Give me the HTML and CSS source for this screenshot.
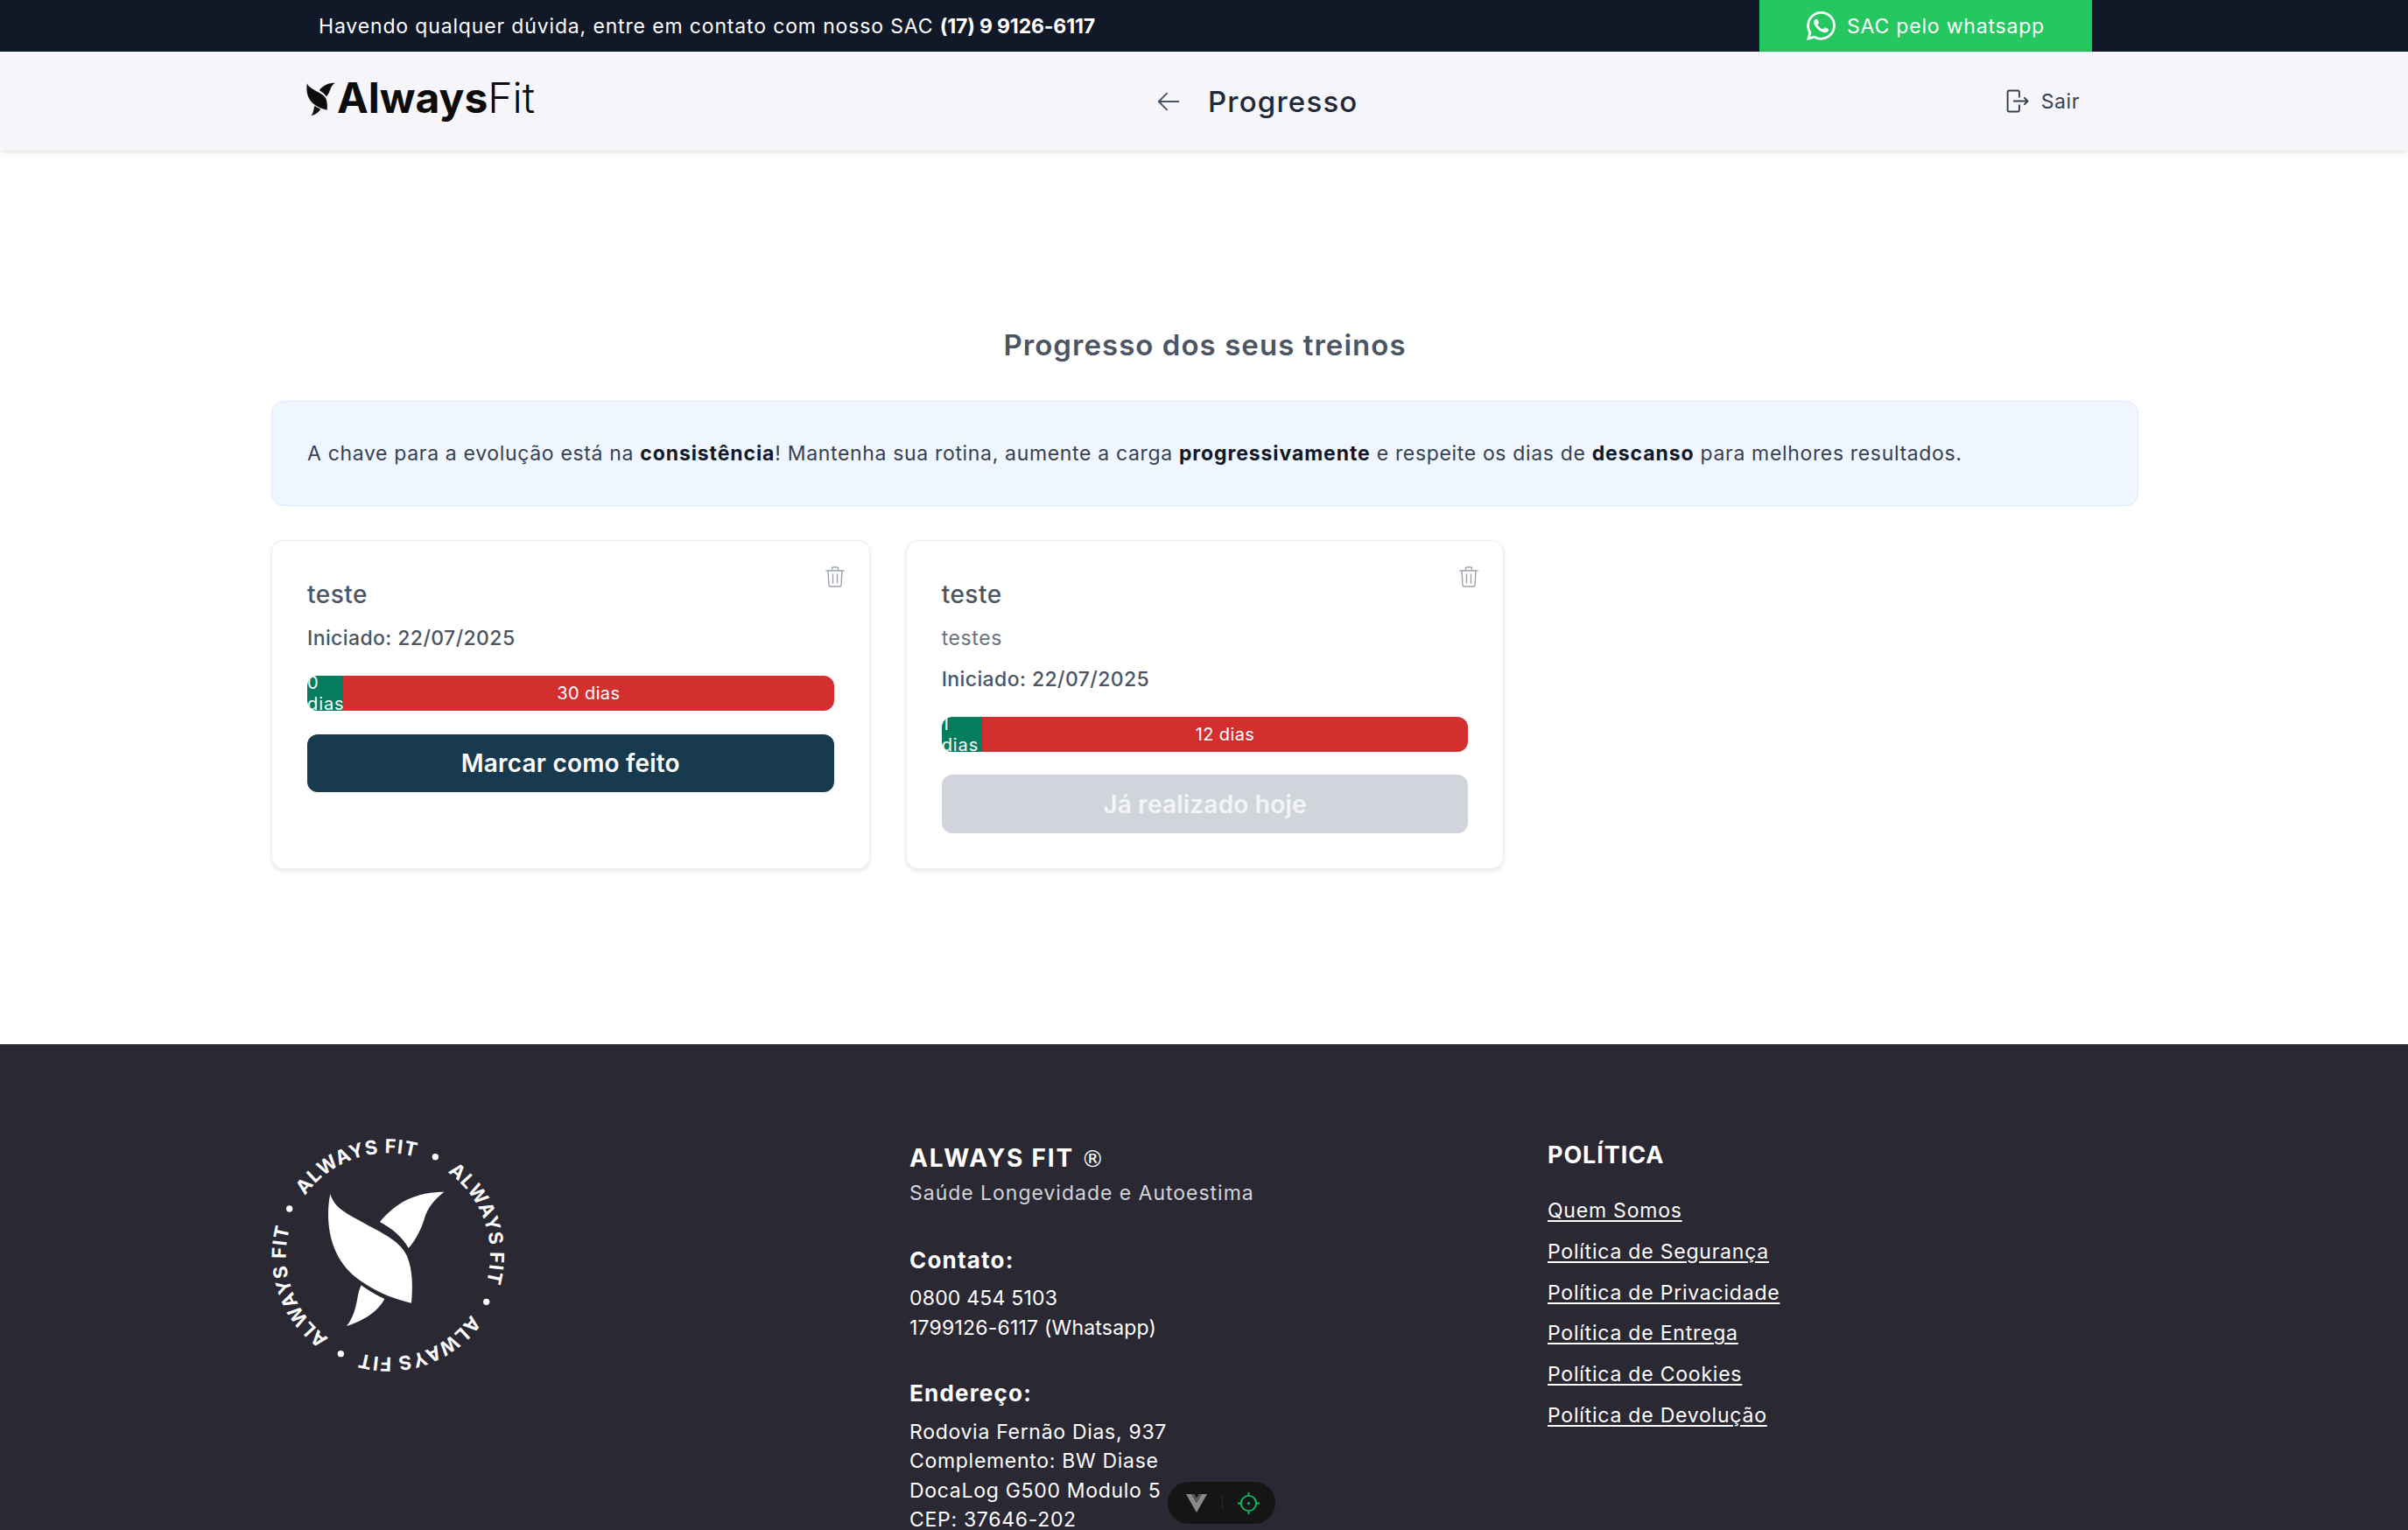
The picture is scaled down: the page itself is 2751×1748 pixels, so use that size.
FILE: index.html
```html
<!DOCTYPE html>
<html lang="pt-BR">
<head>
    <meta charset="UTF-8">
    <meta name="viewport" content="width=device-width, initial-scale=1.0">
    <title>Progresso</title>
    <link rel="stylesheet" href="styles.css">
</head>
<body>
<div class="topbar">
  <span class="topbar-text">Havendo qualquer dúvida, entre em contato com nosso SAC <b>(17) 9 9126-6117</b></span>
  <a class="whats-btn">
    <svg class="whats-icon" viewBox="0 0 24 24"><path fill="#fff" d="M17.472 14.382c-.297-.149-1.758-.867-2.03-.967-.273-.099-.471-.148-.67.15-.197.297-.767.966-.94 1.164-.173.199-.347.223-.644.075-.297-.15-1.255-.463-2.39-1.475-.883-.788-1.48-1.761-1.653-2.059-.173-.297-.018-.458.13-.606.134-.133.298-.347.446-.52.149-.174.198-.298.298-.497.099-.198.05-.371-.025-.52-.075-.149-.669-1.612-.916-2.207-.242-.579-.487-.5-.669-.51-.173-.008-.371-.01-.57-.01-.198 0-.52.074-.792.372-.272.297-1.04 1.016-1.04 2.479 0 1.462 1.065 2.875 1.213 3.074.149.198 2.096 3.2 5.077 4.487.709.306 1.262.489 1.694.625.712.227 1.36.195 1.871.118.571-.085 1.758-.719 2.006-1.413.248-.694.248-1.289.173-1.413-.074-.124-.272-.198-.57-.347m-5.421 7.403h-.004a9.87 9.87 0 01-5.031-1.378l-.361-.214-3.741.982.998-3.648-.235-.374a9.86 9.86 0 01-1.51-5.26c.001-5.45 4.436-9.884 9.888-9.884 2.64 0 5.122 1.03 6.988 2.898a9.825 9.825 0 012.893 6.994c-.003 5.45-4.437 9.884-9.885 9.884m8.413-18.297A11.815 11.815 0 0012.05 0C5.495 0 .16 5.335.157 11.892c0 2.096.547 4.142 1.588 5.945L.057 24l6.305-1.654a11.882 11.882 0 005.683 1.448h.005c6.554 0 11.89-5.335 11.893-11.893a11.821 11.821 0 00-3.48-8.413Z"/></svg>
    SAC pelo whatsapp
  </a>
</div>

<header class="header">
  <a class="logo">
    <svg class="logo-mark" viewBox="250 270 405 470"><path d="M262 282C275 330 320 350 370 378C430 412 500 440 525 495C545 545 545 600 540 656C470 640 400 610 340 560C285 510 255 440 255 350C255 325 258 300 262 282Z"/><path d="M652 275C620 275 560 280 510 310C480 328 450 355 432 378C470 398 510 430 530 468C555 440 575 400 585 365C595 330 620 300 652 275Z"/><path d="M368 595C395 615 425 632 448 642C430 675 395 710 318 735C340 710 350 670 355 640C358 622 362 608 368 595Z"/></svg>
    <span class="logo-text"><b>Always</b>Fit</span>
  </a>
  <div class="page-title">
    <svg class="back-icon" viewBox="0 0 24 24" fill="none" stroke="#4b5563" stroke-width="1.5" stroke-linecap="round" stroke-linejoin="round"><path d="M10.5 19.5 3 12l7.5-7.5M3 12h18"/></svg>
    <span>Progresso</span>
  </div>
  <a class="logout">
    <svg class="logout-icon" viewBox="0 0 24 24" fill="none" stroke="#374151" stroke-width="1.6" stroke-linecap="round" stroke-linejoin="round"><path d="M14 8V3.500A1.500 1.500 0 0 0 12.500 2H4.500A1.500 1.500 0 0 0 3 3.500v17A1.500 1.500 0 0 0 4.500 22h8a1.500 1.500 0 0 0 1.500-1.500V16"/><path d="M9 12h13M19 9l3 3-3 3"/></svg>
    Sair
  </a>
</header>

<main class="main">
  <h1 class="main-title">Progresso dos seus treinos</h1>
  <div class="tip">A chave para a evolução está na <b>consistência</b>! Mantenha sua rotina, aumente a carga <b>progressivamente</b> e respeite os dias de <b>descanso</b> para melhores resultados.</div>

  <div class="cards">
    <div class="card">
      <svg class="trash" viewBox="0 0 22 24" fill="none" stroke="#9ca3af" stroke-width="1.4" stroke-linecap="round" stroke-linejoin="round"><path d="M1 5h20M7.500 5V2.500A1.500 1.500 0 0 1 9 1h4a1.500 1.500 0 0 1 1.500 1.500V5M3 5l1 16.500A1.500 1.500 0 0 0 5.500 23h11a1.500 1.500 0 0 0 1.500-1.500L19 5M8.500 9v10M13.500 9v10"/></svg>
      <h2 class="card-title">teste</h2>
      <p class="card-started">Iniciado: 22/07/2025</p>
      <div class="bar">
        <div class="bar-done w-first">0 dias</div>
        <div class="bar-left">30 dias</div>
      </div>
      <button class="btn">Marcar como feito</button>
    </div>

    <div class="card">
      <svg class="trash" viewBox="0 0 22 24" fill="none" stroke="#9ca3af" stroke-width="1.4" stroke-linecap="round" stroke-linejoin="round"><path d="M1 5h20M7.500 5V2.500A1.500 1.500 0 0 1 9 1h4a1.500 1.500 0 0 1 1.500 1.500V5M3 5l1 16.500A1.500 1.500 0 0 0 5.500 23h11a1.500 1.500 0 0 0 1.500-1.500L19 5M8.500 9v10M13.500 9v10"/></svg>
      <h2 class="card-title">teste</h2>
      <p class="card-desc">testes</p>
      <p class="card-started second">Iniciado: 22/07/2025</p>
      <div class="bar">
        <div class="bar-done w-second">1 dias</div>
        <div class="bar-left">12 dias</div>
      </div>
      <button class="btn btn-disabled" disabled>Já realizado hoje</button>
    </div>
  </div>
</main>

<footer class="footer">
  <div class="footer-logo">
    <svg class="seal" viewBox="0 0 930 930">
      <defs><path id="ring" d="M460 142A350 350 0 1 1 459.900 142"/></defs>
      <g fill="#fff">
        <path d="M262 282C275 330 320 350 370 378C430 412 500 440 525 495C545 545 545 600 540 656C470 640 400 610 340 560C285 510 255 440 255 350C255 325 258 300 262 282Z"/>
        <path d="M652 275C620 275 560 280 510 310C480 328 450 355 432 378C470 398 510 430 530 468C555 440 575 400 585 365C595 330 620 300 652 275Z"/>
        <path d="M368 595C395 615 425 632 448 642C430 675 395 710 318 735C340 710 350 670 355 640C358 622 362 608 368 595Z"/>
        <circle cx="622" cy="155" r="11"/><circle cx="122" cy="333" r="11"/><circle cx="797" cy="652" r="11"/><circle cx="298" cy="830" r="11"/>
        <g class="seal-text">
          <text transform="rotate(-54.400 460 492)"><textPath href="#ring" textLength="428">ALWAYS FIT</textPath></text>
          <text transform="rotate(35.600 460 492)"><textPath href="#ring" textLength="428">ALWAYS FIT</textPath></text>
          <text transform="rotate(125.600 460 492)"><textPath href="#ring" textLength="428">ALWAYS FIT</textPath></text>
          <text transform="rotate(215.600 460 492)"><textPath href="#ring" textLength="428">ALWAYS FIT</textPath></text>
        </g>
      </g>
    </svg>
  </div>

  <div class="footer-info">
    <h3 class="footer-brand">ALWAYS FIT <span class="reg">®</span></h3>
    <p class="footer-slogan">Saúde Longevidade e Autoestima</p>
    <h4 class="footer-head">Contato:</h4>
    <div class="footer-lines">
      <p>0800 454 5103</p>
      <p>1799126-6117 (Whatsapp)</p>
    </div>
    <h4 class="footer-head address">Endereço:</h4>
    <div class="footer-lines address-lines">
      <p>Rodovia Fernão Dias, 937</p>
      <p>Complemento: BW Diase</p>
      <p>DocaLog G500 Modulo 5</p>
      <p>CEP: 37646-202</p>
    </div>
  </div>

  <div class="footer-links">
    <h3 class="footer-policy">POLÍTICA</h3>
    <a>Quem Somos</a>
    <a>Política de Segurança</a>
    <a>Política de Privacidade</a>
    <a>Política de Entrega</a>
    <a>Política de Cookies</a>
    <a>Política de Devolução</a>
  </div>
</footer>

<div class="devtools">
  <svg class="dev-vue" viewBox="0 0 24 21"><path fill="#8a8a8a" d="M0 0h6l6 10 6-10h6L12 21z"/><path fill="#5a5a5a" d="M6 0h3.500L12 4.500 14.500 0H18l-6 10z"/></svg>
  <span class="dev-sep"></span>
  <svg class="dev-target" viewBox="0 0 26 26" fill="none" stroke="#10b860" stroke-width="2"><circle cx="13" cy="13" r="9"/><circle cx="13" cy="13" r="1.600" fill="#10b860" stroke="none"/><path d="M13 0v4M13 22v4M0 13h4M22 13h4"/></svg>
</div>
</body>
</html>
```

FILE: styles.css
```css
* {
  box-sizing: border-box;
}

html, body {
  margin: 0;
  height: 100vh;
  overflow: hidden;
}

body {
  font-family: Inter, "Liberation Sans", sans-serif;
  font-size: 23px;
  color: #374151;
  background: #fff;
}

p, h1, h2, h3, h4 {
  margin: 0;
}

/* barra de contato */
.topbar {
  height: 59px;
  background: #111827;
  color: #fff;
  display: flex;
  align-items: center;
  justify-content: space-between;
  padding: 0 361px 0 364px;
}

.topbar-text {
  letter-spacing: 0.85px;
}

.topbar-text b {
  font-weight: 700;
  letter-spacing: -0.15px;
}

.whats-btn {
  width: 380px;
  height: 59px;
  background: #25c761;
  display: flex;
  align-items: center;
  justify-content: center;
  gap: 13px;
  letter-spacing: 0.8px;
}

.whats-icon {
  width: 33px;
  height: 33px;
}

/* cabeçalho */
.header {
  height: 113px;
  background: #f5f5fa;
  box-shadow: 0 2px 6px rgba(0, 0, 0, 0.12);
  display: flex;
  align-items: center;
  padding: 0 375px 0 350px;
  position: relative;
}

.logo {
  width: 970px;
  display: flex;
  align-items: center;
  gap: 2px;
  color: #0c0c0c;
}

.logo-mark {
  width: 33px;
  height: 41px;
  margin-bottom: 4px;
  fill: #0c0c0c;
}

.logo-text {
  font-size: 48px;
  font-weight: 300;
  line-height: 58px;
  margin-bottom: 7px;
}

.logo-text b {
  font-weight: 700;
}

.page-title {
  display: flex;
  align-items: center;
  gap: 30px;
  font-size: 33px;
  font-weight: 500;
  color: #1f2937;
  letter-spacing: 1.2px;
}

.back-icon {
  width: 30px;
  height: 30px;
}

.logout {
  margin-left: auto;
  display: flex;
  align-items: center;
  gap: 13px;
  letter-spacing: 0.6px;
  color: #374151;
}

.logout-icon {
  width: 29px;
  height: 29px;
  margin-left: -2px;
}

/* conteúdo */
.main {
  width: 2133px;
  margin-left: 310px;
  padding: 199px 0 200px;
}

.main-title {
  font-size: 33px;
  font-weight: 600;
  line-height: 46px;
  text-align: center;
  color: #4b5563;
  letter-spacing: 1.05px;
}

.tip {
  margin-top: 41px;
  height: 120px;
  padding: 0 40px;
  line-height: 118px;
  background: #eff6ff;
  border: 1px solid #dbeafe;
  border-radius: 14px;
  letter-spacing: 0.66px;
  color: #374151;
}

.tip b {
  font-weight: 700;
  letter-spacing: 0.9px;
  color: #111827;
}

.cards {
  margin-top: 39px;
  display: grid;
  grid-template-columns: repeat(3, 1fr);
  gap: 41px;
}

.card {
  position: relative;
  padding: 42px 40px 40px;
  background: #fff;
  border: 1px solid #eceef1;
  border-radius: 14px;
  box-shadow: 0 2px 5px rgba(0, 0, 0, 0.1);
}

.trash {
  position: absolute;
  top: 29px;
  right: 28px;
  width: 22px;
  height: 24px;
}

.card-title {
  font-size: 28px;
  font-weight: 500;
  line-height: 38px;
  color: #4b5563;
  letter-spacing: 0.5px;
}

.card-started {
  margin-top: 14px;
  font-weight: 500;
  line-height: 34px;
  color: #4b5563;
  letter-spacing: 0.4px;
}

.card-started.second {
  margin-top: 13px;
}

.card-desc {
  margin-top: 14px;
  line-height: 34px;
  color: #6b7280;
  letter-spacing: 0.6px;
}

.bar {
  margin-top: 26px;
  height: 40px;
  display: flex;
  border-radius: 12px;
  overflow: hidden;
  font-size: 20px;
  line-height: 24px;
  color: #fff;
  letter-spacing: 0.4px;
}

.bar-done {
  background: #067d5e;
  display: flex;
  align-items: center;
  letter-spacing: 0.9px;
}

.w-first {
  width: 41px;
}

.w-second {
  width: 46px;
}

.bar-left {
  flex: 1;
  background: #d32f2f;
  display: flex;
  align-items: center;
  justify-content: center;
}

.btn {
  display: block;
  width: 100%;
  height: 66px;
  margin-top: 27px;
  border: 0;
  border-radius: 12px;
  background: #173a4e;
  color: #fff;
  font-family: inherit;
  font-size: 28px;
  font-weight: 600;
  letter-spacing: 0.2px;
}

.btn-disabled {
  margin-top: 26px;
  height: 67px;
  background: #d1d5db;
  color: #f3f4f6;
}

/* rodapé */
.footer {
  background: #2a2833;
  color: #fff;
  min-height: 600px;
  padding: 77px 309px 0 310px;
  display: grid;
  grid-template-columns: repeat(3, 1fr);
  column-gap: 55px;
  align-items: start;
}

.seal {
  display: block;
  width: 310px;
  height: 310px;
  margin-left: -20px;
}

.seal-text {
  font-size: 66px;
  font-weight: 700;
}

.footer-info {
  padding-top: 34px;
}

.footer-brand {
  font-size: 28px;
  font-weight: 700;
  line-height: 38px;
  letter-spacing: 1.8px;
}

.reg {
  font-family: "DejaVu Sans", sans-serif;
  font-size: 26px;
  font-weight: 400;
  letter-spacing: 0;
}

.footer-slogan {
  margin-top: 3px;
  line-height: 34px;
  color: #d1d5db;
  letter-spacing: 0.98px;
}

.footer-head {
  margin-top: 41px;
  font-size: 26px;
  font-weight: 700;
  line-height: 38px;
  letter-spacing: 1.2px;
}

.footer-head.address {
  margin-top: 39px;
}

.footer-lines {
  margin-top: 7px;
  line-height: 34px;
  letter-spacing: 0.2px;
}

.address-lines {
  margin-top: 9px;
  line-height: 33.3px;
  letter-spacing: 0.7px;
}

.footer-links {
  padding-top: 31px;
  display: flex;
  flex-direction: column;
  align-items: flex-start;
}

.footer-policy {
  font-size: 27px;
  font-weight: 700;
  line-height: 38px;
  margin-bottom: 27px;
  letter-spacing: 0.9px;
}

.footer-links a {
  line-height: 34px;
  margin-bottom: 12.800px;
  text-decoration: underline;
  text-decoration-thickness: 2px;
  text-underline-offset: 3px;
  letter-spacing: 0.78px;
}

/* ferramenta de dev */
.devtools {
  position: fixed;
  left: 1334px;
  top: 1693px;
  width: 123px;
  height: 48px;
  padding: 0 18px 0 21px;
  border-radius: 24px;
  background: #151515;
  display: flex;
  align-items: center;
  justify-content: space-between;
}

.dev-vue {
  width: 24px;
  height: 21px;
}

.dev-sep {
  width: 1px;
  height: 16px;
  background: #2a2a2a;
}

.dev-target {
  width: 25px;
  height: 25px;
}
```
